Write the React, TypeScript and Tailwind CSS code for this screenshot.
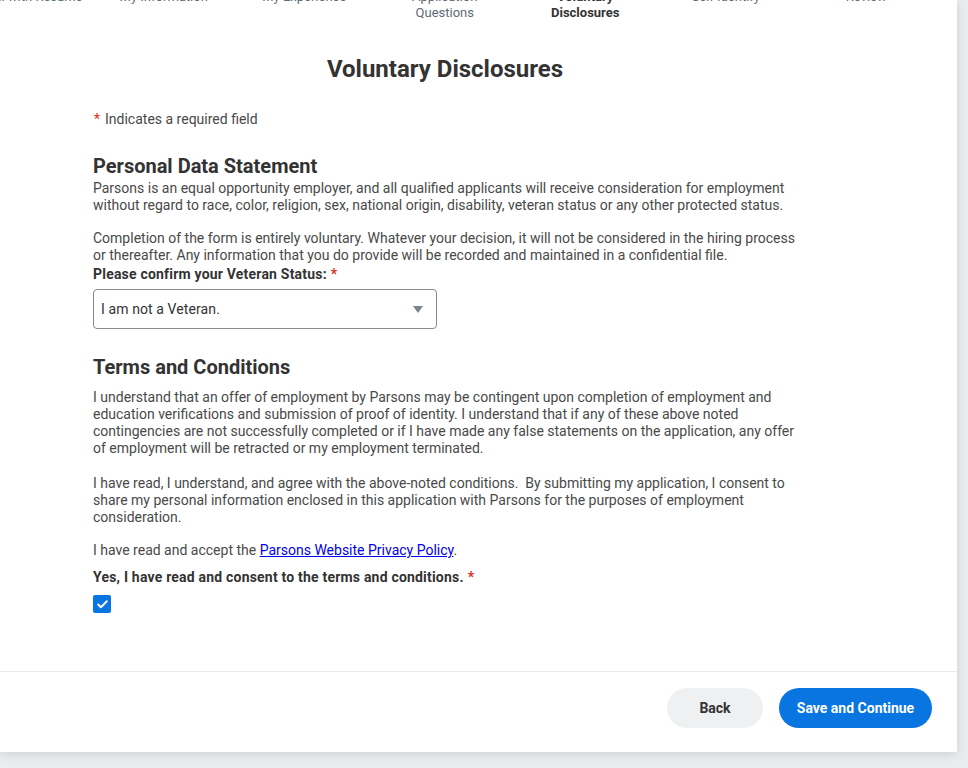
import { Check } from "lucide-react";

const steps = [
  "Autofill with Resume",
  "My Information",
  "My Experience",
  "Application Questions",
  "Voluntary Disclosures",
  "Self Identify",
  "Review",
];

function Req() {
  return <span className="text-[#de2e21] ml-[4px]">*</span>;
}

export default function App() {
  return (
    <div className="min-h-screen bg-[#ebecee] font-['Roboto',sans-serif] overflow-hidden">
      <div className="w-[957px] h-[752px] bg-white shadow-[0_2px_10px_rgba(0,0,0,0.12)] flex flex-col overflow-hidden">
        {/* stepper, scrolled partly out of view */}
        <div className="flex -mt-[11px] -ml-[47px] shrink-0">
          {steps.map((s) => (
            <div
              key={s}
              className={
                "w-[140.5px] shrink-0 text-[13px] leading-[16px] " +
                (s === "Voluntary Disclosures"
                  ? "px-4 text-center font-bold text-[#333333]"
                  : s === "Autofill with Resume"
                  ? "whitespace-nowrap text-right pr-[11px] text-[#5f6a74]"
                  : "px-4 text-center text-[#5f6a74]")
              }
            >
              {s}
            </div>
          ))}
        </div>

        <div className="flex-1 ml-[93px] w-[704px]">
          <h1 className="mt-[34px] text-center text-[24px] leading-[28px] font-bold text-[#333333]">
            Voluntary Disclosures
          </h1>

          <p className="mt-[28px] text-[14px] leading-[17px] text-[#494949]">
            <span className="text-[#de2e21] ml-[1px] mr-[5px]">*</span>Indicates a required field
          </p>

          <h2 className="mt-[26px] text-[20px] leading-[24px] font-bold text-[#333333]">
            Personal Data Statement
          </h2>
          <div className="mt-[2px] text-[14px] leading-[17px] text-[#494949]">
            <p>
              Parsons is an equal opportunity employer, and all qualified applicants will receive consideration for
              employment without regard to race, color, religion, sex, national origin, disability, veteran status or any
              other protected status.
            </p>
            <p className="mt-[16px]">
              Completion of the form is entirely voluntary. Whatever your decision, it will not be considered in the hiring
              process or thereafter. Any information that you do provide will be recorded and maintained in a confidential
              file.
            </p>
          </div>

          <div className="mt-[2px] text-[14px] leading-[17px] font-bold tracking-[0.2px] text-[#333333]">
            Please confirm your Veteran Status:
            <Req />
          </div>
          <div className="mt-[6px] w-[344px] h-[40px] rounded-[4px] border border-[#868b91] flex items-center justify-between pl-[7px] pr-[13px]">
            <span className="text-[14px] text-[#333333] tracking-[0.1px]">I am not a Veteran.</span>
            <svg width="10" height="7" viewBox="0 0 10 7">
              <path d="M0 0 H10 L5 7 Z" fill="#7b858f" />
            </svg>
          </div>

          <h2 className="mt-[26px] text-[20px] leading-[24px] font-bold text-[#333333]">
            Terms and Conditions
          </h2>
          <div className="mt-[10px] text-[14px] leading-[17px] text-[#494949]">
            <p>
              I understand that an offer of employment by Parsons may be contingent upon completion of employment and
              education verifications and submission of proof of identity. I understand that if any of these above noted
              contingencies are not successfully completed or if I have made any false statements on the application, any
              offer of employment will be retracted or my employment terminated.
            </p>
            <p className="mt-[18px]">
              I have read, I understand, and agree with the above-noted conditions.&nbsp; By submitting my application, I
              consent to share my personal information enclosed in this application with Parsons for the purposes of
              employment consideration.
            </p>
            <p className="mt-[16px]">
              I have read and accept the{" "}
              <a href="#" className="text-[#0000ee] underline">
                Parsons Website Privacy Policy
              </a>
              .
            </p>
          </div>

          <div className="mt-[10px] text-[14px] leading-[17px] font-bold tracking-[0.2px] text-[#333333]">
            Yes, I have read and consent to the terms and conditions.
            <Req />
          </div>
          <div className="mt-[9px] w-[18px] h-[18px] rounded-[2px] bg-[#0875e1] flex items-center justify-center">
            <Check className="w-[13px] h-[13px] text-white" strokeWidth={3.5} />
          </div>
        </div>

        <div className="shrink-0 border-t border-[#e8e9eb] pt-[16px] pb-[24px] pr-[25px] flex justify-end gap-[16px]">
          <button className="w-[96px] h-[40px] rounded-full bg-[#eef0f2] text-[14px] font-bold text-[#333333]">
            Back
          </button>
          <button className="w-[153px] h-[40px] rounded-full bg-[#0875e1] text-[14px] font-bold text-white">
            Save and Continue
          </button>
        </div>
      </div>
    </div>
  );
}
